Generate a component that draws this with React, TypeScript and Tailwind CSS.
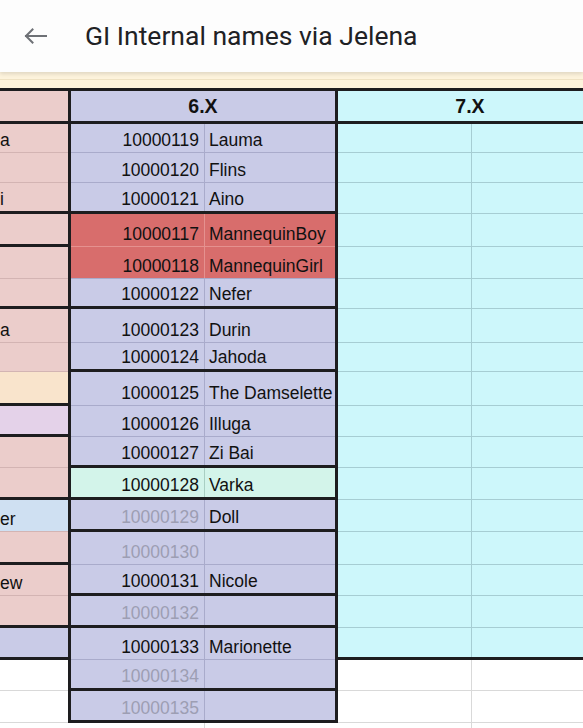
import React from 'react';

type Edge = 'thick' | 'lthin' | 'mthin' | 'rthin' | 'cthin' | 'gray' | 'none';

const edge: Record<Edge, string> = {
  thick: 'border-b-[3px] border-b-[#1d1d1f]',
  lthin: 'border-b border-b-[#d3b4b3]',
  mthin: 'border-b border-b-[#a9abcb]',
  rthin: 'border-b border-b-[#e5918f]',
  cthin: 'border-b border-b-[#a6cdd3]',
  gray: 'border-b border-b-[#d9d9d9]',
  none: '',
};

const leftBg = {
  pink: 'bg-[#ebcdcb]',
  cream: 'bg-[#f9e4cc]',
  lilac: 'bg-[#e4d2e9]',
  blue: 'bg-[#cfe0f2]',
  lav: 'bg-[#c9cbe7]',
  white: 'bg-white',
};

const midBg = {
  lav: 'bg-[#c9cbe7]',
  red: 'bg-[#d86d6c]',
  mint: 'bg-[#d3f4ea]',
};

type Row = {
  h: string;
  id: string;
  name?: string;
  faded?: boolean;
  mid: keyof typeof midBg;
  mb: Edge;
  left: keyof typeof leftBg;
  lb: Edge;
  lt?: string;
  right: 'cyan' | 'white';
  rb: Edge;
};

const rows: Row[] = [
  { h: 'h-[29px]', id: '10000119', name: 'Lauma', mid: 'lav', mb: 'mthin', left: 'pink', lb: 'lthin', lt: 'a', right: 'cyan', rb: 'cthin' },
  { h: 'h-[30px]', id: '10000120', name: 'Flins', mid: 'lav', mb: 'mthin', left: 'pink', lb: 'lthin', right: 'cyan', rb: 'cthin' },
  { h: 'h-[31px]', id: '10000121', name: 'Aino', mid: 'lav', mb: 'thick', left: 'pink', lb: 'thick', lt: 'i', right: 'cyan', rb: 'cthin' },
  { h: 'h-[33px]', id: '10000117', name: 'MannequinBoy', mid: 'red', mb: 'rthin', left: 'pink', lb: 'thick', right: 'cyan', rb: 'cthin' },
  { h: 'h-[32px]', id: '10000118', name: 'MannequinGirl', mid: 'red', mb: 'mthin', left: 'pink', lb: 'lthin', right: 'cyan', rb: 'cthin' },
  { h: 'h-[30px]', id: '10000122', name: 'Nefer', mid: 'lav', mb: 'thick', left: 'pink', lb: 'thick', right: 'cyan', rb: 'cthin' },
  { h: 'h-[34px]', id: '10000123', name: 'Durin', mid: 'lav', mb: 'mthin', left: 'pink', lb: 'lthin', lt: 'a', right: 'cyan', rb: 'cthin' },
  { h: 'h-[29px]', id: '10000124', name: 'Jahoda', mid: 'lav', mb: 'thick', left: 'pink', lb: 'lthin', right: 'cyan', rb: 'cthin' },
  { h: 'h-[34px]', id: '10000125', name: 'The Damselette', mid: 'lav', mb: 'mthin', left: 'cream', lb: 'thick', right: 'cyan', rb: 'cthin' },
  { h: 'h-[31px]', id: '10000126', name: 'Illuga', mid: 'lav', mb: 'mthin', left: 'lilac', lb: 'thick', right: 'cyan', rb: 'cthin' },
  { h: 'h-[31px]', id: '10000127', name: 'Zi Bai', mid: 'lav', mb: 'thick', left: 'pink', lb: 'lthin', right: 'cyan', rb: 'cthin' },
  { h: 'h-[32px]', id: '10000128', name: 'Varka', mid: 'mint', mb: 'thick', left: 'pink', lb: 'thick', right: 'cyan', rb: 'cthin' },
  { h: 'h-[32px]', id: '10000129', name: 'Doll', faded: true, mid: 'lav', mb: 'thick', left: 'blue', lb: 'lthin', lt: 'er', right: 'cyan', rb: 'cthin' },
  { h: 'h-[33px]', id: '10000130', faded: true, mid: 'lav', mb: 'mthin', left: 'pink', lb: 'thick', right: 'cyan', rb: 'cthin' },
  { h: 'h-[31px]', id: '10000131', name: 'Nicole', mid: 'lav', mb: 'thick', left: 'pink', lb: 'lthin', lt: 'ew', right: 'cyan', rb: 'cthin' },
  { h: 'h-[32px]', id: '10000132', faded: true, mid: 'lav', mb: 'thick', left: 'pink', lb: 'thick', right: 'cyan', rb: 'cthin' },
  { h: 'h-[32px]', id: '10000133', name: 'Marionette', mid: 'lav', mb: 'mthin', left: 'lav', lb: 'thick', right: 'cyan', rb: 'thick' },
  { h: 'h-[31px]', id: '10000134', faded: true, mid: 'lav', mb: 'thick', left: 'white', lb: 'gray', right: 'white', rb: 'gray' },
  { h: 'h-[32px]', id: '10000135', faded: true, mid: 'lav', mb: 'thick', left: 'white', lb: 'gray', right: 'white', rb: 'gray' },
];

const cellFont = "text-[17.5px] leading-[20px] font-['Liberation_Sans',Arial,sans-serif]";
const headFont = "text-[19.5px] leading-[22px] font-bold text-[#111] font-['Liberation_Sans',Arial,sans-serif]";

function SheetRow({ r }: { r: Row }) {
  const cyan = r.right === 'cyan';
  return (
    <div className={`flex shrink-0 w-[602px] ${r.h}`}>
      <div className={`w-[68px] shrink-0 flex items-end pb-[2px] overflow-hidden ${leftBg[r.left]} ${edge[r.lb]}`}>
        <span className={`${cellFont} text-[#111]`}>{r.lt}</span>
      </div>
      <div className="w-[3px] shrink-0 bg-[#1d1d1f]" />
      <div className={`w-[264px] shrink-0 flex ${midBg[r.mid]} ${edge[r.mb]}`}>
        <div className="w-[133px] flex items-end justify-end pr-[5px] pb-[2px]">
          <span className={`${cellFont} ${r.faded ? 'text-[#9d9eb3]' : 'text-[#111]'}`}>{r.id}</span>
        </div>
        <div className={`w-px ${r.mid === 'red' ? 'bg-[#e5918f]' : r.mid === 'mint' ? 'bg-[#a9cfc3]' : 'bg-[#a9abcb]'}`} />
        <div className="flex-1 flex items-end pl-[4px] pb-[2px] whitespace-nowrap">
          <span className={`${cellFont} text-[#111]`}>{r.name}</span>
        </div>
      </div>
      <div className="w-[3px] shrink-0 bg-[#1d1d1f]" />
      <div className={`w-[264px] shrink-0 flex ${cyan ? 'bg-[#cdf7fb]' : 'bg-white'} ${edge[r.rb]}`}>
        <div className="w-[133px]" />
        <div className={`w-px ${cyan ? 'bg-[#a6cdd3]' : 'bg-[#d9d9d9]'}`} />
        <div className="flex-1" />
      </div>
    </div>
  );
}

export default function App() {
  return (
    <div className="w-[583px] h-[728px] overflow-hidden bg-white flex flex-col">
      {/* app bar */}
      <div className="relative z-10 h-[72px] shrink-0 bg-[#fdfdfd] flex items-center shadow-[0_2px_4px_rgba(0,0,0,0.12)]">
        <svg className="ml-[23px] mt-[-1px]" width="25" height="24" viewBox="0 0 25 24" fill="none" stroke="#6e7176" strokeWidth="2" strokeLinecap="square">
          <path d="M23 12H3" />
          <path d="M9.5 5.5 3 12l6.5 6.5" />
        </svg>
        <span className="ml-[37px] text-[26.5px] leading-none text-[#202124] font-['Roboto',Arial,sans-serif]">GI Internal names via Jelena</span>
      </div>

      {/* frozen row peeking under the bar */}
      <div className="h-[16px] shrink-0 bg-[#fdf3dc] flex flex-col">
        <div className="h-[8px] border-b border-b-[#efe2c3]" />
      </div>

      {/* header */}
      <div className="h-[36px] w-[602px] shrink-0 flex border-t-[3px] border-b-[3px] border-[#1d1d1f]">
        <div className="w-[68px] shrink-0 bg-[#ebcdcb]" />
        <div className="w-[3px] shrink-0 bg-[#1d1d1f]" />
        <div className={`w-[264px] shrink-0 bg-[#c9cbe7] flex items-center justify-center ${headFont}`}>6.X</div>
        <div className="w-[3px] shrink-0 bg-[#1d1d1f]" />
        <div className={`w-[264px] shrink-0 bg-[#cdf7fb] flex items-center justify-center ${headFont}`}>7.X</div>
      </div>

      {rows.map(r => (
        <SheetRow key={r.id} r={r} />
      ))}

      {/* next row, cut off */}
      <div className="flex shrink-0 w-[602px] h-[30px]">
        <div className="w-[68px] shrink-0 bg-white" />
        <div className="w-[3px] shrink-0 bg-white" />
        <div className="w-[133px] shrink-0 bg-white" />
        <div className="w-px shrink-0 bg-[#d9d9d9]" />
        <div className="w-[130px] shrink-0 bg-white" />
        <div className="w-[3px] shrink-0 bg-white" />
        <div className="w-[133px] shrink-0 bg-white" />
        <div className="w-px shrink-0 bg-[#d9d9d9]" />
        <div className="flex-1 bg-white" />
      </div>
    </div>
  );
}
